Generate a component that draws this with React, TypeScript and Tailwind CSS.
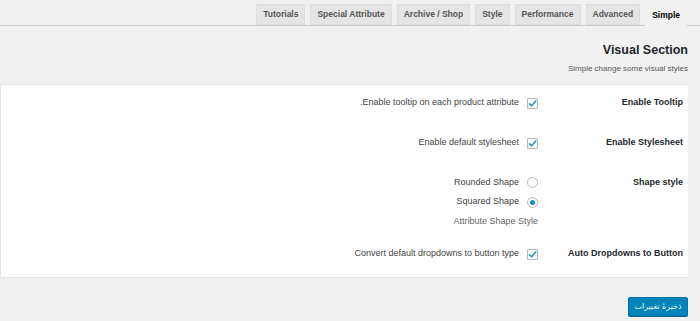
const tabs = ["Simple", "Advanced", "Performance", "Style", "Archive / Shop", "Special Attribute", "Tutorials"];

function Check() {
  return (
    <span className="w-[11px] h-[11px] border border-[#b4b9be] bg-white rounded-[1px] flex items-center justify-center shrink-0 shadow-[inset_0_1px_2px_rgba(0,0,0,0.07)]">
      <svg width="9" height="9" viewBox="0 0 10 10">
        <path d="M1.5 5.2 L4 7.6 L8.6 2.2" fill="none" stroke="#1e8cbe" strokeWidth="1.6" strokeLinecap="round" strokeLinejoin="round" />
      </svg>
    </span>
  );
}

function Radio({ on }: { on?: boolean }) {
  return (
    <span className="w-[11px] h-[11px] border border-[#b4b9be] bg-white rounded-full flex items-center justify-center shrink-0">
      {on && <span className="w-[5px] h-[5px] rounded-full bg-[#1e8cbe]" />}
    </span>
  );
}

export default function App() {
  return (
    <div dir="rtl" className="w-[700px] h-[321px] overflow-hidden bg-[#f1f1f1] font-['Liberation_Sans',Arial,sans-serif] text-[#444]">
      <div className="flex gap-[5px] pr-[13px] pt-[4px] border-b border-[#ccc] h-[26px]">
        {tabs.map((t, i) => (
          <div
            key={t}
            className={
              i === 0
                ? "h-[22px] px-[6px] flex items-center text-[8.5px] font-bold text-black bg-[#f1f1f1] border border-[#f1f1f1] -mb-px"
                : "h-[21px] px-[6px] flex items-center text-[8.5px] font-bold text-[#555] bg-[#e5e5e5] border border-[#ddd]"
            }
          >
            {t}
          </div>
        ))}
      </div>

      <div className="pr-[12px]">
        <h2 className="mt-[17px] text-[12.5px] leading-[15px] font-bold text-[#23282d]">Visual Section</h2>
        <p className="mt-[6px] text-[8px] leading-[10px] text-[#555]">Simple change some visual styles</p>

        <div className="mt-[10px] bg-white border-y border-l border-[#e5e5e5] text-[9px]">
          <div className="flex h-[36px] items-center">
            <div className="w-[150px] pr-[5px] font-bold text-[#23282d]">Enable Tooltip</div>
            <div className="flex items-center gap-[8px]">
              <Check />
              <span>Enable tooltip on each product attribute.</span>
            </div>
          </div>
          <div className="flex h-[44px] items-center">
            <div className="w-[150px] pr-[5px] font-bold text-[#23282d]">Enable Stylesheet</div>
            <div className="flex items-center gap-[8px]">
              <Check />
              <span>Enable default stylesheet</span>
            </div>
          </div>
          <div className="flex pt-[8px] h-[68px]">
            <div className="w-[150px] pr-[5px] h-[20px] flex items-center font-bold text-[#23282d]">Shape style</div>
            <div className="flex flex-col">
              <div className="h-[19px] flex items-center gap-[8px]">
                <Radio />
                <span>Rounded Shape</span>
              </div>
              <div className="h-[20px] flex items-center gap-[8px]">
                <Radio on />
                <span>Squared Shape</span>
              </div>
              <div className="h-[20px] flex items-center text-[#666]">Attribute Shape Style</div>
            </div>
          </div>
          <div className="flex h-[44px] items-center pb-[2px]">
            <div className="w-[150px] pr-[5px] font-bold text-[#23282d]">Auto Dropdowns to Button</div>
            <div className="flex items-center gap-[8px]">
              <Check />
              <span>Convert default dropdowns to button type</span>
            </div>
          </div>
        </div>

        <button className="mt-[19px] w-[60px] h-[19px] rounded-[2px] bg-[#0085ba] border border-[#0073aa] text-white text-[8px] font-['DejaVu_Sans',sans-serif] flex items-center justify-center shadow-[0_1px_0_#006799]">
          ذخیرهٔ تغییرات
        </button>
      </div>
    </div>
  );
}
